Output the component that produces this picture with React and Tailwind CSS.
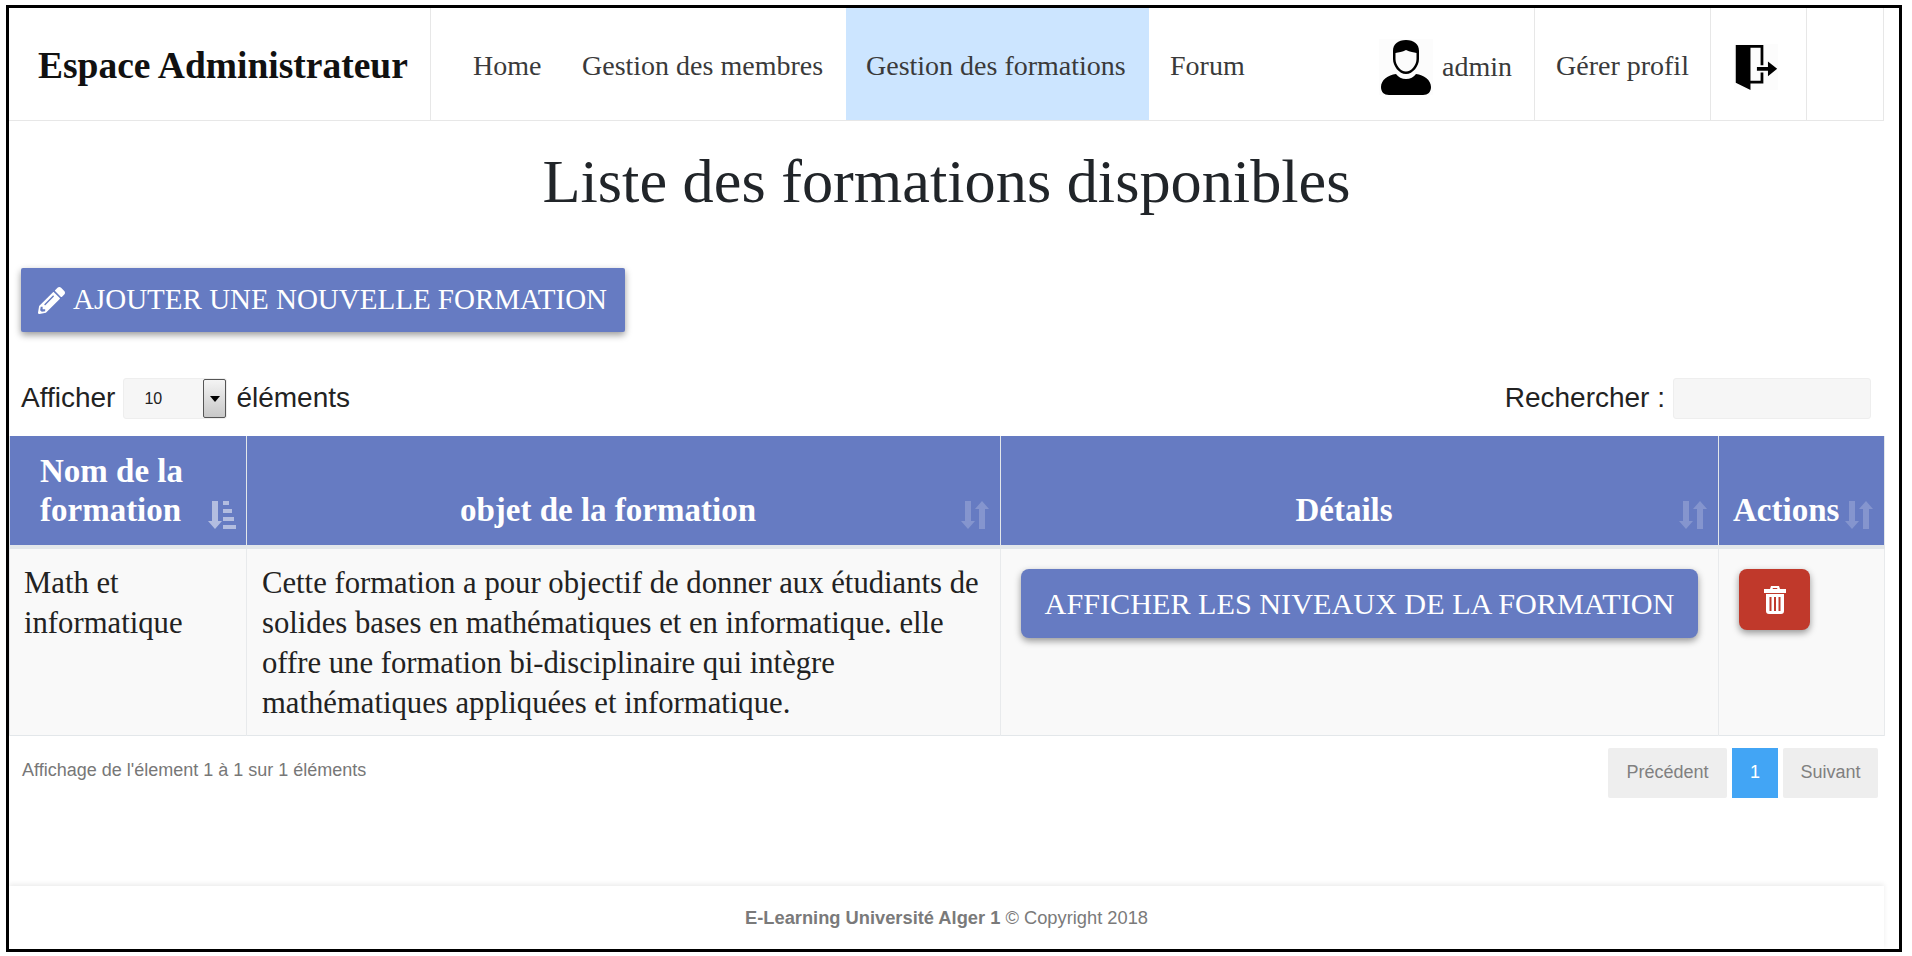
import { FaPencilAlt } from "react-icons/fa";

const SERIF = "font-['Liberation_Serif',serif]";
const SANS = "font-['Liberation_Sans',sans-serif]";

// icones de tri (glyphicon sort)
function SortIcon() {
  return (
    <svg width="28" height="30" viewBox="0 0 28 30" className="text-white opacity-20 shrink-0">
      <path d="M4 1h6v20h4l-7 8-7-8h4z" fill="currentColor" />
      <path d="M18 29h6V9h4l-7-8-7 8h4z" fill="currentColor" />
    </svg>
  );
}

function SortActiveIcon() {
  return (
    <svg width="28" height="30" viewBox="0 0 28 30" className="text-white opacity-50 shrink-0">
      <path d="M4 1h6v20h4l-7 8-7-8h4z" fill="currentColor" />
      <path d="M15 1h6v4h-6zM15 9h9v4h-9zM15 17h11v4H15zM15 25h13v4H15z" fill="currentColor" />
    </svg>
  );
}

function TrashIcon() {
  return (
    <svg width="22" height="28" viewBox="0 0 22 28">
      <path
        d="M7 0h8l1 3h6v4H0V3h6zM9 2l-.5 1h5L13 2zM2 8h18v17c0 2-1 3-3 3H5c-2 0-3-1-3-3zM5.5 11v14h2V11zM10 11v14h2V11zM14.5 11v14h2V11z"
        fill="#fff"
        fillRule="evenodd"
      />
    </svg>
  );
}

function UserIcon() {
  return (
    <svg width="54" height="56" viewBox="0 0 54 56" className="bg-[#fcfcfc]">
      <path
        d="M27 1c-8 0-13 4-13 11v8c0 7 6 15 13 15s13-8 13-15v-8c0-7-5-11-13-11zm0 10c4 2 8 2 10.5 3v6c0 6-5 12.5-10.5 12.5S16.500 26 16.500 20v-6c3-1 7-1 10.500-3z"
        fill="#000"
        fillRule="evenodd"
      />
      <path d="M17 35c2 3 6 5 10 5s8-2 10-5c8 1 15 6 15 13 0 5-3 8-8 8H10c-5 0-8-3-8-8 0-7 7-12 15-13z" fill="#000" />
    </svg>
  );
}

function DoorIcon() {
  return (
    <svg width="44" height="46" viewBox="0 0 46 50" className="bg-[#fcfcfc]">
      <path d="M1 1h30v22h-3V4H17v36h11V31h3v12H17v7L1 42z" fill="#000" />
      <path d="M24 25h12v-6l10 8-10 8v-6H24z" fill="#000" />
    </svg>
  );
}

function NavLink({ children, className = "" }) {
  return <div className={`flex items-center h-full pt-[4px] text-[28px] text-[#3a3a3a] ${className}`}>{children}</div>;
}

export default function App() {
  return (
    <div className="w-[1912px] h-[956px] bg-white pt-[5px] pl-[6px] overflow-hidden">
      <div className={`w-[1896px] h-[947px] border-[3px] border-black flex flex-col ${SERIF}`}>
        {/* navbar */}
        <nav className="h-[113px] w-[1875px] shrink-0 flex border-b border-[#e7e7e7] border-r">
          <div className="w-[422px] border-r border-[#e7e7e7] flex items-center pl-[29px] pt-[4px] text-[37.5px] font-bold text-[#111] whitespace-nowrap">
            Espace Administrateur
          </div>
          <NavLink className="w-[67px] ml-[42px]">Home</NavLink>
          <NavLink className="ml-[42px] w-[264px] whitespace-nowrap">Gestion des membres</NavLink>
          <NavLink className="bg-[#cce5ff] w-[303px] pl-[20px] whitespace-nowrap">Gestion des formations</NavLink>
          <NavLink className="ml-[21px] w-[206px]">Forum</NavLink>
          <div className="flex items-center h-full w-[159px] pl-[3px] pt-[6px] border-r border-[#e7e7e7]">
            <UserIcon />
            <span className="ml-[9px] text-[28px] text-[#3a3a3a]">admin</span>
          </div>
          <NavLink className="w-[176px] pl-[21px] border-r border-[#e7e7e7] whitespace-nowrap">Gérer profil</NavLink>
          <div className="w-[96px] flex items-center pl-[23px] pt-[6px] border-r border-[#e7e7e7]">
            <DoorIcon />
          </div>
        </nav>

        {/* titre */}
        <h1 className="h-[147px] w-[1875px] shrink-0 pt-[22px] text-center text-[62.3px] leading-[76px] text-[#212529]">
          Liste des formations disponibles
        </h1>

        {/* bouton ajouter */}
        <div className="pl-[12px] shrink-0">
          <button className="h-[64px] w-[604px] bg-[#667bc2] text-white rounded-[2px] flex items-center gap-[8px] pl-[17px] text-[29px] whitespace-nowrap shadow-[0_3px_7px_rgba(0,0,0,0.4)]">
            <FaPencilAlt className="text-[27px]" />
            AJOUTER UNE NOUVELLE FORMATION
          </button>
        </div>

        {/* filtres */}
        <div className={`mt-[46px] w-[1850px] ml-[12px] h-[41px] shrink-0 flex items-center justify-between text-[28px] text-[#222] ${SANS}`}>
          <div className="flex items-center">
            <span className="pb-[2px]">Afficher</span>
            <div className="ml-[8px] mr-[9px] w-[104px] h-[41px] bg-[#f6f6f6] border border-[#eee] rounded-[3px] flex items-center justify-between">
              <span className="ml-[20px] text-[16px]">10</span>
              <span className="w-[23px] h-[39px] border border-[#555] rounded-[2px] bg-gradient-to-b from-[#f4f4f4] to-[#c8c8c8] flex items-center justify-center">
                <span className="w-0 h-0 border-x-[5px] border-x-transparent border-t-[6px] border-t-black"></span>
              </span>
            </div>
            <span className="pb-[2px]">éléments</span>
          </div>
          <div className="flex items-center">
            <span className="pb-[2px]">Rechercher :</span>
            <div className="ml-[8px] w-[198px] h-[41px] bg-[#f6f6f6] border border-[#eee] rounded-[3px]"></div>
          </div>
        </div>

        {/* tableau */}
        <table className="mt-[17px] w-[1875px] shrink-0 table-fixed border-collapse">
          <colgroup>
            <col className="w-[237px]" />
            <col className="w-[754px]" />
            <col className="w-[718px]" />
            <col className="w-[166px]" />
          </colgroup>
          <thead>
            <tr className="h-[111px] bg-[#667bc2] text-white text-[33px] leading-[39px]">
              <th className="border-x border-[#e3e7ea] align-bottom pb-[15px] font-bold">
                <div className="flex items-end pl-[30px] pr-[10px] justify-between">
                  <span className="text-left w-[160px]">Nom de la formation</span>
                  <SortActiveIcon />
                </div>
              </th>
              <th className="border-x border-[#e3e7ea] align-bottom pb-[15px] font-bold">
                <div className="flex items-end justify-between pr-[11px]">
                  <span className="flex-1 text-center pl-[8px]">objet de la formation</span>
                  <SortIcon />
                </div>
              </th>
              <th className="border-x border-[#e3e7ea] align-bottom pb-[15px] font-bold">
                <div className="flex items-end justify-between pr-[11px]">
                  <span className="flex-1 text-center pl-[8px]">Détails</span>
                  <SortIcon />
                </div>
              </th>
              <th className="border-x border-[#e3e7ea] align-bottom pb-[15px] font-bold">
                <div className="flex items-end justify-between pl-[14px] pr-[11px]">
                  <span>Actions</span>
                  <SortIcon />
                </div>
              </th>
            </tr>
          </thead>
          <tbody>
            <tr className="h-[188px] bg-[#f9f9f9] border-t-[4px] border-[#e3e7ea] border-b text-[30.7px] leading-[40px] text-[#222] align-top">
              <td className="border-x border-[#e8eaec] pl-[14px] pt-[14px]">Math et informatique</td>
              <td className="border-x border-[#e8eaec] pl-[15px] pr-[10px] pt-[14px]">
                Cette formation a pour objectif de donner aux étudiants de solides bases en mathématiques et en informatique. elle offre une formation bi-disciplinaire qui intègre mathématiques appliquées et informatique.
              </td>
              <td className="border-x border-[#e8eaec] pl-[20px] pt-[20px]">
                <button className="w-[677px] h-[69px] bg-[#667bc2] text-white rounded-[8px] text-[30.2px] whitespace-nowrap shadow-[0_3px_7px_rgba(0,0,0,0.4)]">
                  AFFICHER LES NIVEAUX DE LA FORMATION
                </button>
              </td>
              <td className="border-x border-[#e8eaec] pl-[20px] pt-[20px]">
                <button className="w-[71px] h-[61px] bg-[#c0392b] text-white rounded-[8px] flex items-center justify-center shadow-[0_3px_7px_rgba(0,0,0,0.4)]">
                  <TrashIcon />
                </button>
              </td>
            </tr>
          </tbody>
        </table>

        {/* pagination */}
        <div className={`mt-[12px] w-[1856px] ml-[13px] h-[50px] shrink-0 flex justify-between ${SANS}`}>
          <div className="text-[18px] text-[#777] leading-[44px]">Affichage de l'élement 1 à 1 sur 1 éléments</div>
          <div className="flex gap-[5px] text-[18px]">
            <span className="w-[119px] h-[50px] bg-[#eee] text-[#808080] rounded-[2px] flex items-center justify-center">Précédent</span>
            <span className="w-[46px] h-[50px] bg-[#42a5f5] text-white flex items-center justify-center">1</span>
            <span className="w-[95px] h-[50px] bg-[#eee] text-[#808080] rounded-[2px] flex items-center justify-center">Suivant</span>
          </div>
        </div>

        {/* footer */}
        <footer className={`mt-auto h-[63px] w-[1875px] shrink-0 shadow-[0_-2px_5px_rgba(0,0,0,0.08)] flex items-center justify-center text-[18.3px] text-[#7a7a7a] ${SANS}`}>
          <span><b>E-Learning Université Alger 1</b> © Copyright 2018</span>
        </footer>
      </div>
    </div>
  );
}
